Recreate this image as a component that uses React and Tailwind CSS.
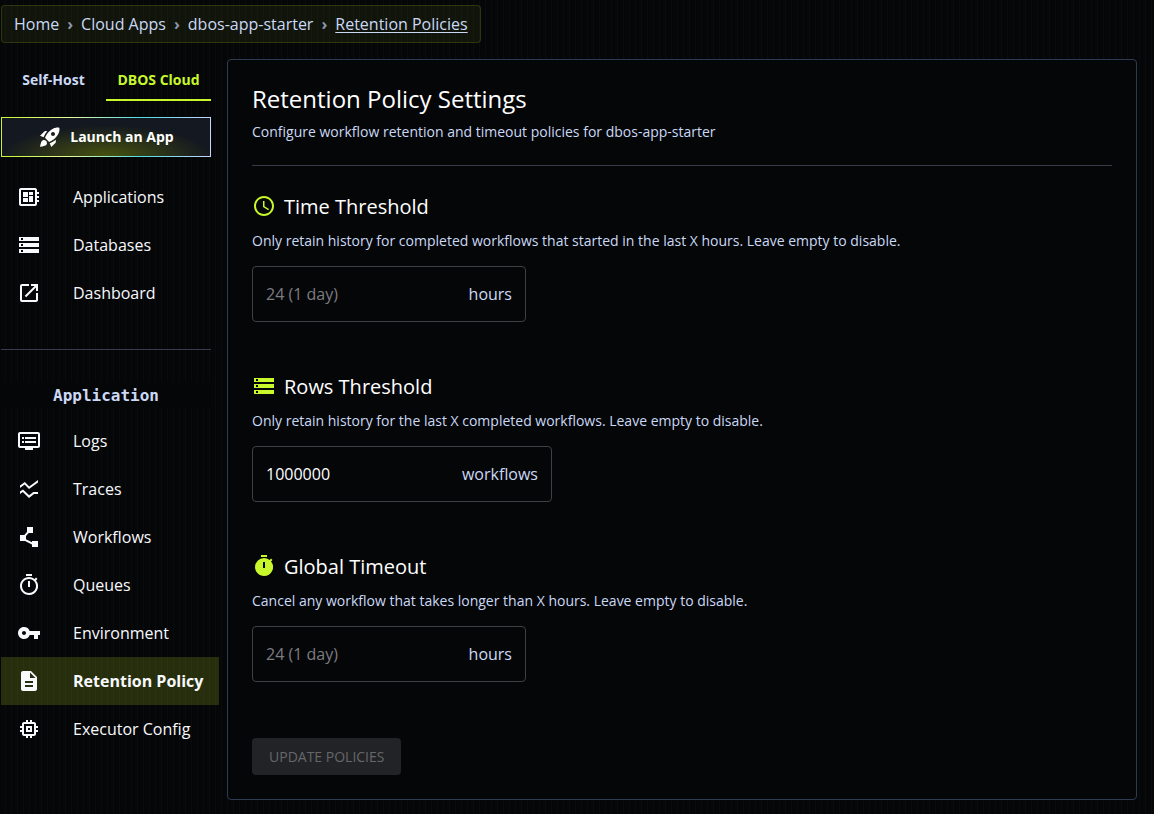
import { useState } from 'react'
import clsx from 'clsx'
import {
  MdAccessTime,
  MdDescription,
  MdMemory,
  MdOpenInNew,
  MdOutlineDeveloperBoard,
  MdOutlineDvr,
  MdOutlineTimer,
  MdPolyline,
  MdRocketLaunch,
  MdSsidChart,
  MdStorage,
  MdTimer,
  MdVpnKey,
} from 'react-icons/md'

const CRUMBS = ['Home', 'Cloud Apps', 'dbos-app-starter', 'Retention Policies']

const TABS = ['Self-Host', 'DBOS Cloud']

const MAIN_NAV = [
  { label: 'Applications', icon: MdOutlineDeveloperBoard },
  { label: 'Databases', icon: MdStorage },
  { label: 'Dashboard', icon: MdOpenInNew },
]

const APP_NAV = [
  { label: 'Logs', icon: MdOutlineDvr },
  { label: 'Traces', icon: MdSsidChart },
  { label: 'Workflows', icon: MdPolyline },
  { label: 'Queues', icon: MdOutlineTimer },
  { label: 'Environment', icon: MdVpnKey },
  { label: 'Retention Policy', icon: MdDescription, active: true },
  { label: 'Executor Config', icon: MdMemory },
]

const POLICIES = [
  {
    id: 'time',
    title: 'Time Threshold',
    icon: MdAccessTime,
    text: 'Only retain history for completed workflows that started in the last X hours. Leave empty to disable.',
    placeholder: '24 (1 day)',
    unit: 'hours',
    width: 'w-[274px]',
  },
  {
    id: 'rows',
    title: 'Rows Threshold',
    icon: MdStorage,
    text: 'Only retain history for the last X completed workflows. Leave empty to disable.',
    initial: '1000000',
    unit: 'workflows',
    width: 'w-[300px]',
  },
  {
    id: 'timeout',
    title: 'Global Timeout',
    icon: MdTimer,
    text: 'Cancel any workflow that takes longer than X hours. Leave empty to disable.',
    placeholder: '24 (1 day)',
    unit: 'hours',
    width: 'w-[274px]',
  },
]

function Breadcrumbs() {
  return (
    <nav
      aria-label="Breadcrumb"
      className="flex w-fit rounded border border-[#c8f72b]/15 bg-[#c8f72b]/6 px-3 py-1.5"
    >
      <ol className="flex items-center leading-6">
        {CRUMBS.map((crumb, i) => {
          const last = i === CRUMBS.length - 1
          return (
            <li key={crumb} className="flex items-center">
              <a
                href="#"
                aria-current={last ? 'page' : undefined}
                className={clsx('text-[#cbd9f5]', last && 'font-medium underline underline-offset-2')}
              >
                {crumb}
              </a>
              {!last && <span className="px-2 font-bold text-[#8e97ad]">›</span>}
            </li>
          )
        })}
      </ol>
    </nav>
  )
}

function NavList({ items }) {
  return (
    <ul>
      {items.map(({ label, icon: Icon, active }) => (
        <li key={label}>
          <a
            href="#"
            aria-current={active ? 'page' : undefined}
            className={clsx(
              'flex h-12 items-center gap-8 pl-4 whitespace-nowrap text-[#f8f9fc]',
              active && '-mr-2 bg-[#c8f72b]/17 font-bold'
            )}
          >
            <Icon className="size-6 shrink-0" />
            {label}
          </a>
        </li>
      ))}
    </ul>
  )
}

function Sidebar() {
  const [tab, setTab] = useState('DBOS Cloud')

  return (
    <aside className="w-[210px] shrink-0">
      <div role="tablist" className="grid grid-cols-2">
        {TABS.map((name) => (
          <button
            key={name}
            type="button"
            role="tab"
            aria-selected={tab === name}
            onClick={() => setTab(name)}
            className={clsx(
              'h-[42px] border-b-2 pt-0.5 text-sm font-bold',
              tab === name ? 'border-[#c8f72b] text-[#c8f72b]' : 'border-transparent text-[#cbd9f5]'
            )}
          >
            {name}
          </button>
        ))}
      </div>

      <button
        type="button"
        className="mt-4 flex h-10 w-full bg-[linear-gradient(90deg,#c8f72b,#e6f9a0_33%,#4ddbe6_67%,#c9d5ff)] p-px"
      >
        <span className="flex size-full items-center justify-center gap-2 bg-[#141820] bg-[radial-gradient(50%_80%_at_50%_100%,#46530f,transparent)] text-sm font-bold text-white">
          <MdRocketLaunch className="size-6" />
          Launch an App
        </span>
      </button>

      <div className="mt-4 border-b border-[#363b52] pb-8">
        <NavList items={MAIN_NAV} />
      </div>

      <h2 className="mt-8 mb-2 bg-[#050608] text-center font-['DejaVu_Sans_Mono',monospace] text-base leading-[27px] font-bold text-[#cbd9f5]">
        Application
      </h2>
      <NavList items={APP_NAV} />
    </aside>
  )
}

function PolicyField({ id, title, icon: Icon, text, placeholder, initial = '', unit, width }) {
  const [value, setValue] = useState(initial)

  return (
    <section>
      <h2 className="flex h-7 items-center gap-2 text-xl font-medium text-white">
        <Icon className="size-6 text-[#c8f72b]" />
        <label htmlFor={id} className="pt-0.5">
          {title}
        </label>
      </h2>
      <p className="mt-[11px] text-sm text-[#cbd9f5]">{text}</p>
      <div
        className={clsx(
          'mt-[15px] flex h-14 max-w-full items-center gap-2 rounded border border-[#3f4043] px-[13px]',
          width
        )}
      >
        <input
          id={id}
          type="text"
          inputMode="numeric"
          value={value}
          placeholder={placeholder}
          onChange={(e) => setValue(e.target.value)}
          className="min-w-0 flex-1 bg-transparent text-white outline-none placeholder:text-[#7c7d80]"
        />
        <span className="text-[#cbd9f5]">{unit}</span>
      </div>
    </section>
  )
}

function SettingsPanel() {
  return (
    <main className="min-w-0 flex-1 rounded border border-[#2f3a53] bg-[#050608] p-6">
      <header className="border-b border-[#363b48] pb-[23px]">
        <h1 className="text-2xl leading-[30px] font-medium text-white">Retention Policy Settings</h1>
        <p className="mt-2 text-sm text-[#cbd9f5]">
          Configure workflow retention and timeout policies for dbos-app-starter
        </p>
      </header>

      <form className="pt-[26px]" onSubmit={(e) => e.preventDefault()}>
        <div className="flex flex-col gap-[50px]">
          {POLICIES.map((policy) => (
            <PolicyField key={policy.id} {...policy} />
          ))}
        </div>
        <button
          type="submit"
          disabled
          className="mt-14 h-[37px] rounded bg-[#222326] px-[17px] text-sm font-medium text-[#66676a] uppercase"
        >
          Update Policies
        </button>
      </form>
    </main>
  )
}

export default function App() {
  return (
    <div className="min-h-screen bg-[#050608] bg-[repeating-linear-gradient(90deg,transparent_0_5px,#0a0b0c_5px_6px)] pt-[5px] pr-[17px] pb-3.5 pl-px font-['Open_Sans',sans-serif] text-base">
      <Breadcrumbs />
      <div className="mt-4 flex items-start gap-4">
        <Sidebar />
        <SettingsPanel />
      </div>
    </div>
  )
}
